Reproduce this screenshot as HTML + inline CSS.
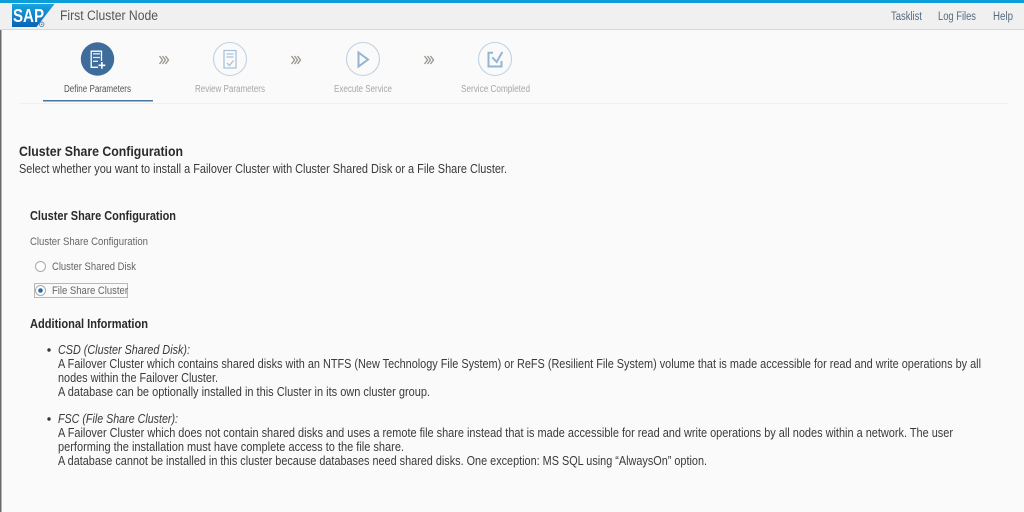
<!DOCTYPE html>
<html><head><meta charset="utf-8"><style>
html,body{margin:0;padding:0;width:1024px;height:512px;overflow:hidden;background:#fafafa}
svg{display:block}
text{font-family:"Liberation Sans",sans-serif;font-size:12px;fill:#333}
.h{font-weight:bold;fill:#2a2a2a;font-size:12.500px}
.b{fill:#3a3a3a;font-size:12.500px}
.g{fill:#aaa6a4;font-size:10px}
.l{fill:#566a80;font-size:11.500px}
.o{font-size:11px;fill:#666}
</style></head><body>
<svg width="1024" height="512" viewBox="0 0 1024 512" xmlns="http://www.w3.org/2000/svg">
<rect width="1024" height="512" fill="#fafafa"/>
<rect y="0" width="1024" height="29" fill="#f0f0f0"/>
<rect y="29" width="1024" height="1" fill="#d8d8d8"/>
<rect width="1024" height="3" fill="#0a9dda"/>
<rect x="0" y="30" width="1.500" height="482" fill="#6a6a6a"/>
<defs><linearGradient id="sap" x1="0" y1="0" x2="0" y2="1"><stop offset="0" stop-color="#19a4e0"/><stop offset="1" stop-color="#0a62b4"/></linearGradient></defs>
<path d="M12 4H54.500L36.500 27H12Z" fill="url(#sap)"/>
<text x="13" y="22" textLength="31" lengthAdjust="spacingAndGlyphs" style="font-size:18px;font-weight:bold;fill:#fff">SAP</text>
<circle cx="41.700" cy="24.300" r="2.300" fill="none" stroke="#5b8ab5" stroke-width="0.900"/>
<circle cx="41.700" cy="24.300" r="0.800" fill="#5b8ab5"/>
<text x="60" y="20" textLength="98" lengthAdjust="spacingAndGlyphs" style="font-size:13.500px;fill:#555">First Cluster Node</text>
<text x="891" y="20" textLength="31" lengthAdjust="spacingAndGlyphs" class="l">Tasklist</text>
<text x="938" y="20" textLength="38" lengthAdjust="spacingAndGlyphs" class="l">Log Files</text>
<text x="993" y="20" textLength="20" lengthAdjust="spacingAndGlyphs" class="l">Help</text>

<rect x="19" y="103" width="990" height="1" fill="#eef1f4"/>
<rect x="43" y="100" width="110" height="1.500" fill="#4a759c"/>

<circle cx="97.500" cy="59" r="16.700" fill="#3f6d9b"/>
<g fill="none" stroke="#fff" stroke-width="1.300">
<path d="M101.500 61V51.200H91.200V67.300H98"/>
<path d="M93 53.800H100M93 57.500H100M93 61.300H98" stroke="#dfe8f0"/>
<path d="M98.500 65.300H105.300M101.900 62V68.700" stroke-width="1.600"/></g>

<g fill="none" stroke="#9a948f" stroke-width="1.300">
<path id="a" d="M159.500 56L162.500 60L159.500 64M162.500 56L165.500 60L162.500 64M165.500 56L168.500 60L165.500 64"/>
<use href="#a" x="132"/><use href="#a" x="265"/></g>

<g fill="none" stroke="#bfd2e4" stroke-width="1.100">
<circle cx="230" cy="59" r="16.500"/><circle cx="363" cy="59" r="16.500"/><circle cx="495" cy="59" r="16.500"/></g>
<g fill="none" stroke="#a9c2d9" stroke-width="1.300">
<path d="M224 50.500H236V68H224Z"/><path d="M226.500 54H233.500M226.500 57H233.500"/><path d="M227 63L229.500 65.500L233.500 60.500"/></g>
<path d="M358.500 52.500L368 59.500L358.500 66.500Z" fill="none" stroke="#93b4d2" stroke-width="2"/>
<g fill="none" stroke="#93b4d2" stroke-width="2">
<path d="M493 52.800H488.500V66.500H501.500V61"/><path d="M492.300 57.300L496.700 62L502.300 52"/></g>

<text x="64" y="92" textLength="67" lengthAdjust="spacingAndGlyphs" style="font-size:10px;fill:#555">Define Parameters</text>
<text x="195" y="92" textLength="70" lengthAdjust="spacingAndGlyphs" class="g">Review Parameters</text>
<text x="334" y="92" textLength="58" lengthAdjust="spacingAndGlyphs" class="g">Execute Service</text>
<text x="461" y="92" textLength="69" lengthAdjust="spacingAndGlyphs" class="g">Service Completed</text>

<text x="19" y="156" textLength="164" lengthAdjust="spacingAndGlyphs" class="h" style="font-size:13.500px">Cluster Share Configuration</text>
<text x="19" y="173" textLength="488" lengthAdjust="spacingAndGlyphs" class="b">Select whether you want to install a Failover Cluster with Cluster Shared Disk or a File Share Cluster.</text>
<text x="30" y="220" textLength="146" lengthAdjust="spacingAndGlyphs" class="h">Cluster Share Configuration</text>
<text x="30" y="245" textLength="118" lengthAdjust="spacingAndGlyphs" class="o">Cluster Share Configuration</text>

<circle cx="40.500" cy="266.500" r="5" fill="#fff" stroke="#aaa" stroke-width="1"/>
<text x="52" y="270" textLength="84" lengthAdjust="spacingAndGlyphs" class="o">Cluster Shared Disk</text>
<rect x="34.500" y="283.500" width="93" height="14" fill="none" stroke="#777" stroke-width="1" stroke-dasharray="1 1"/>
<circle cx="40.500" cy="290.500" r="5" fill="#fff" stroke="#aaa" stroke-width="1"/>
<circle cx="40.500" cy="290.500" r="2.300" fill="#2a6aa8"/>
<text x="52" y="294" textLength="76" lengthAdjust="spacingAndGlyphs" class="o">File Share Cluster</text>

<text x="30" y="328" textLength="118" lengthAdjust="spacingAndGlyphs" class="h">Additional Information</text>

<circle cx="49" cy="350" r="1.700" fill="#333"/>
<text x="58" y="354" textLength="132" lengthAdjust="spacingAndGlyphs" class="b" style="font-style:italic">CSD (Cluster Shared Disk):</text>
<text x="58" y="368" textLength="923" lengthAdjust="spacingAndGlyphs" class="b">A Failover Cluster which contains shared disks with an NTFS (New Technology File System) or ReFS (Resilient File System) volume that is made accessible for read and write operations by all</text>
<text x="58" y="382" textLength="160" lengthAdjust="spacingAndGlyphs" class="b">nodes within the Failover Cluster.</text>
<text x="58" y="396" textLength="372" lengthAdjust="spacingAndGlyphs" class="b">A database can be optionally installed in this Cluster in its own cluster group.</text>

<circle cx="49" cy="419" r="1.700" fill="#333"/>
<text x="58" y="423" textLength="120" lengthAdjust="spacingAndGlyphs" class="b" style="font-style:italic">FSC (File Share Cluster):</text>
<text x="58" y="437" textLength="895" lengthAdjust="spacingAndGlyphs" class="b">A Failover Cluster which does not contain shared disks and uses a remote file share instead that is made accessible for read and write operations by all nodes within a network. The user</text>
<text x="58" y="451" textLength="346" lengthAdjust="spacingAndGlyphs" class="b">performing the installation must have complete access to the file share.</text>
<text x="58" y="465" textLength="649" lengthAdjust="spacingAndGlyphs" class="b">A database cannot be installed in this cluster because databases need shared disks. One exception: MS SQL using “AlwaysOn” option.</text>
</svg>
</body></html>
